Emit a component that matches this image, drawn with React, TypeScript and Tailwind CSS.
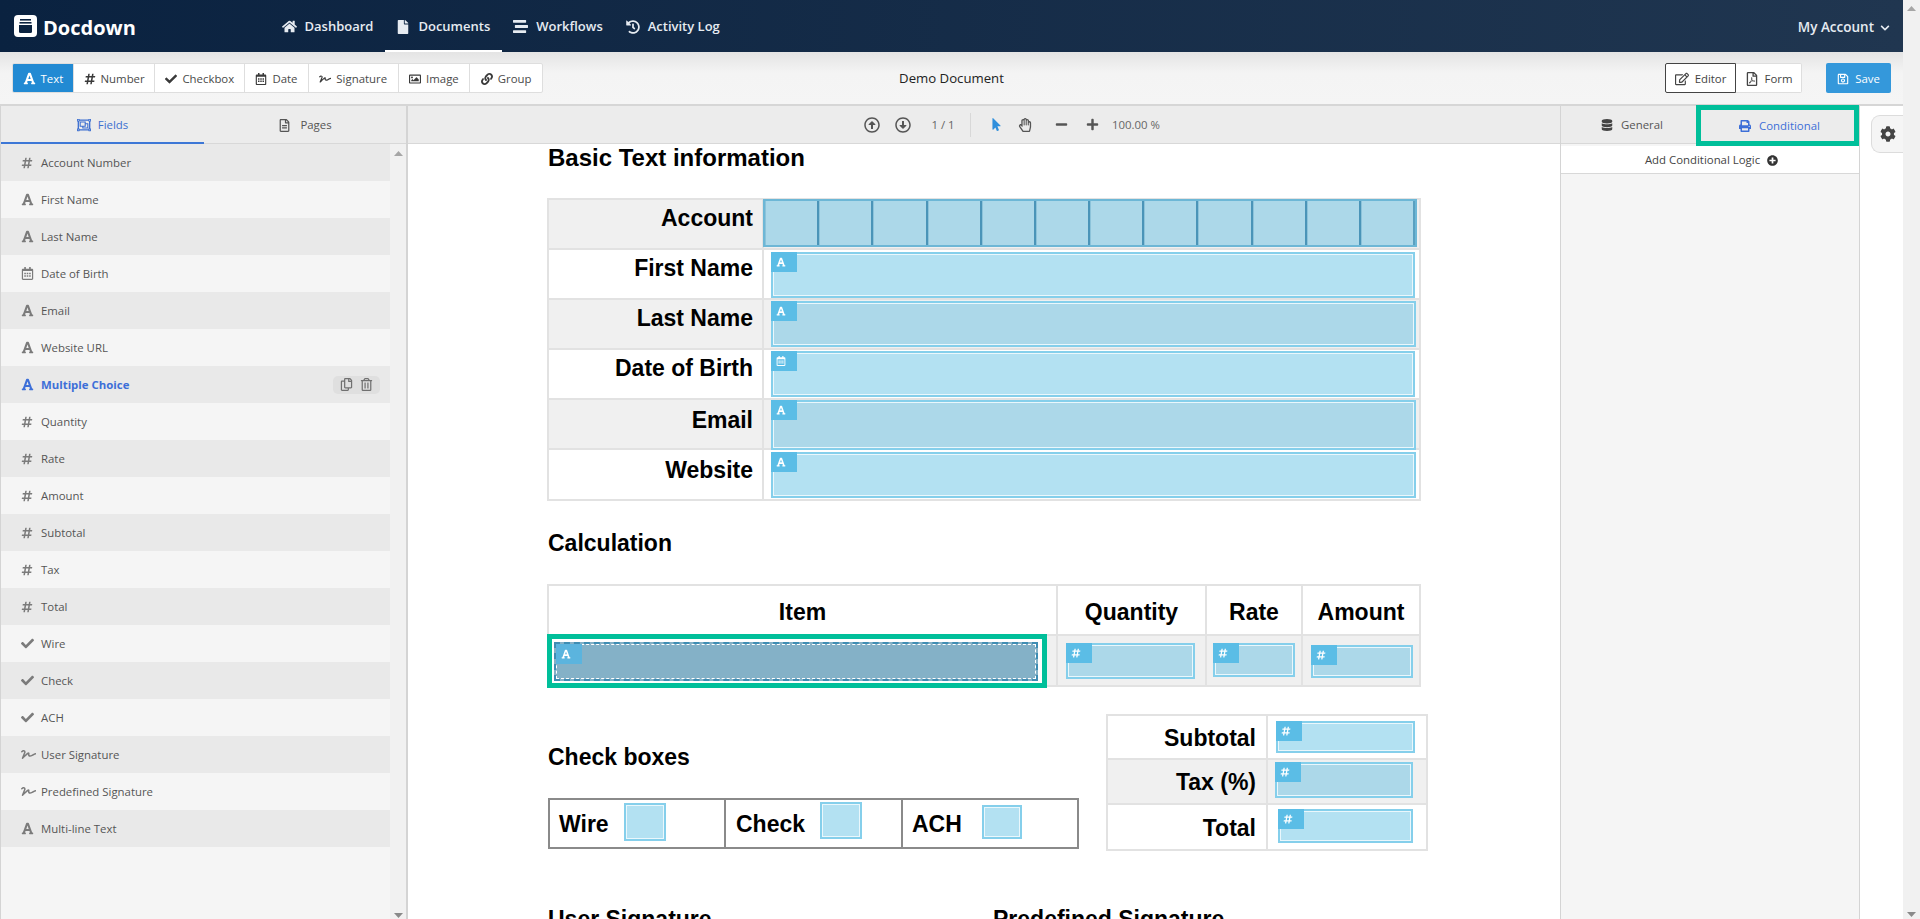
import type { ReactNode } from 'react';
import {
  FaHome, FaFile, FaStream, FaHistory, FaFont, FaHashtag, FaCheck, FaRegCalendarAlt, FaSignature,
  FaRegImage, FaLink, FaRegEdit, FaRegFilePdf, FaRegSave, FaDatabase, FaPrint, FaPlusCircle, FaCog,
  FaChevronDown, FaRegArrowAltCircleUp, FaRegArrowAltCircleDown, FaMousePointer, FaRegHandPaper,
  FaMinus, FaPlus, FaRegCopy, FaRegTrashAlt, FaRegObjectGroup, FaRegFileAlt,
} from 'react-icons/fa';

const fieldRows = [
  { icon: FaHashtag, label: 'Account Number', size: 12 },
  { icon: FaFont, label: 'First Name', size: 13 },
  { icon: FaFont, label: 'Last Name', size: 13 },
  { icon: FaRegCalendarAlt, label: 'Date of Birth', size: 13 },
  { icon: FaFont, label: 'Email', size: 13 },
  { icon: FaFont, label: 'Website URL', size: 13 },
  { icon: FaFont, label: 'Multiple Choice', size: 13, active: true },
  { icon: FaHashtag, label: 'Quantity', size: 12 },
  { icon: FaHashtag, label: 'Rate', size: 12 },
  { icon: FaHashtag, label: 'Amount', size: 12 },
  { icon: FaHashtag, label: 'Subtotal', size: 12 },
  { icon: FaHashtag, label: 'Tax', size: 12 },
  { icon: FaHashtag, label: 'Total', size: 12 },
  { icon: FaCheck, label: 'Wire', size: 13 },
  { icon: FaCheck, label: 'Check', size: 13 },
  { icon: FaCheck, label: 'ACH', size: 13 },
  { icon: FaSignature, label: 'User Signature', size: 15 },
  { icon: FaSignature, label: 'Predefined Signature', size: 15 },
  { icon: FaFont, label: 'Multi-line Text', size: 13 },
];

const toolItems = [
  { icon: FaFont, label: 'Text', width: 'w-[61px]', active: true },
  { icon: FaHashtag, label: 'Number', width: 'w-[82px]' },
  { icon: FaCheck, label: 'Checkbox', width: 'w-[90px]' },
  { icon: FaRegCalendarAlt, label: 'Date', width: 'w-[64px]' },
  { icon: FaSignature, label: 'Signature', width: 'w-[90px]' },
  { icon: FaRegImage, label: 'Image', width: 'w-[72px]' },
  { icon: FaLink, label: 'Group', width: 'w-[72px]' },
];

const navItems = [
  { icon: FaHome, label: 'Dashboard', iconSize: 15 },
  { icon: FaFile, label: 'Documents', iconSize: 14, active: true },
  { icon: FaStream, label: 'Workflows', iconSize: 15 },
  { icon: FaHistory, label: 'Activity Log', iconSize: 14 },
];

function Logo() {
  return (
    <svg width="23" height="22" viewBox="0 0 23 22" className="-mt-[3px] shrink-0">
      <rect width="23" height="22" rx="4" fill="#fff" />
      <rect x="6" y="4" width="11" height="1.6" fill="#0a2240" />
      <rect x="5.5" y="7" width="12" height="1.6" fill="#0a2240" />
      <path d="M5 10h13v6.5a1.5 1.5 0 0 1-1.5 1.5h-10A1.5 1.5 0 0 1 5 16.5z" fill="#0a2240" />
    </svg>
  );
}

function ScrollArrow({ down, color = '#a6a6a6' }: { down?: boolean; color?: string }) {
  return (
    <svg width="9" height="5" viewBox="0 0 9 5">
      <path d={down ? 'M0 0h9L4.5 5z' : 'M4.5 0L9 5H0z'} fill={color} />
    </svg>
  );
}

function Field({
  icon: Icon,
  className,
  tone,
}: {
  icon: typeof FaFont;
  className: string;
  tone: 'light' | 'dark';
}) {
  return (
    <div
      className={`relative shrink-0 border-2 border-[#85cfeb] shadow-[inset_0_0_0_1px_#eaf7fc] ${
        tone === 'light' ? 'bg-[#b3e1f2]' : 'bg-[#acd8e9]'
      } ${className}`}
    >
      <div className="absolute -top-[2px] -left-[2px] flex h-[20px] w-[26px] items-center bg-[#5bbde6] pl-[5px] text-white">
        <Icon size={10} />
      </div>
    </div>
  );
}

function CheckField({ className }: { className: string }) {
  return <div className={`border-2 border-[#85cfeb] bg-[#b3e1f2] shadow-[inset_0_0_0_1px_#eaf7fc] ${className}`} />;
}

function Comb() {
  return (
    <div className="-mt-px -ml-px flex h-[48px] w-[654px] shrink-0 border-2 border-[#6db7d6] bg-[#acd8e9]">
      {Array.from({ length: 12 }).map((_, i) => (
        <div key={i} className="h-full flex-1 border-r-2 border-l border-r-[#4a94b8] border-l-[#8cc3da] last:border-r-[#5aa0c0]" />
      ))}
    </div>
  );
}

function InfoRow({
  label,
  shaded,
  labelClass = 'pt-[5px]',
  children,
  tall,
}: {
  label: string;
  shaded?: boolean;
  labelClass?: string;
  children: ReactNode;
  tall?: boolean;
}) {
  return (
    <div className={`flex border-b-2 border-[#e2e2e2] ${tall ? 'h-[51px]' : 'h-[50px]'} ${shaded ? 'bg-[#f0f0f0]' : 'bg-white'}`}>
      <div className={`h-full w-[215px] shrink-0 border-r-2 border-[#e2e2e2] pr-[9px] text-right ${labelClass}`}>{label}</div>
      {children}
    </div>
  );
}

function ToolButton({ item, last }: { item: (typeof toolItems)[number]; last: boolean }) {
  const Icon = item.icon;
  return (
    <div
      className={`flex h-full items-center justify-center gap-[5px] pt-px text-[11.4px] ${item.width} ${
        item.active ? 'bg-[#228ad3] text-white' : 'text-[#4a4a4a]'
      } ${last ? '' : 'border-r border-[#dedede]'}`}
    >
      <Icon size={item.icon === FaFont ? 13 : 12} className={item.active ? 'text-white' : 'text-[#3a3a3a]'} />
      <span>{item.label}</span>
    </div>
  );
}

export default function App() {
  return (
    <div className="flex h-[919px] w-[1920px] overflow-hidden bg-white font-['Open_Sans',sans-serif]">
      <div className="flex h-full w-[1903px] flex-col">
        {/* Top nav */}
        <header className="flex h-[52px] shrink-0 items-center bg-gradient-to-r from-[#0a2240] to-[#203650] pt-[3px] pr-[13px] pl-[14px] text-[#e6ebf1]">
          <Logo />
          <span className="ml-[6px] w-[227px] shrink-0 text-[20px] font-bold text-white">Docdown</span>
          <nav className="flex h-full">
            {navItems.map((item) => {
              const Icon = item.icon;
              return (
                <div
                  key={item.label}
                  className={`flex h-full items-center gap-[8px] border-b-2 px-[11.5px] text-[13px] font-semibold ${
                    item.active ? 'border-white' : 'border-transparent'
                  }`}
                >
                  <Icon size={item.iconSize} />
                  <span>{item.label}</span>
                </div>
              );
            })}
          </nav>
          <div className="ml-auto flex items-center gap-[6px] text-[13.5px] font-semibold">
            <span>My Account</span>
            <FaChevronDown size={10} />
          </div>
        </header>

        {/* Editor toolbar */}
        <div className="grid h-[52px] shrink-0 grid-cols-[1fr_auto_1fr] items-center bg-gradient-to-b from-[#e4e4e4] via-[#f4f4f4] via-40% to-[#f5f5f5] px-[12px]">
          <div className="flex h-[30px] w-[531px] overflow-hidden rounded-[2px] border border-[#dedede] bg-white">
            {toolItems.map((item, i) => (
              <ToolButton key={item.label} item={item} last={i === toolItems.length - 1} />
            ))}
          </div>
          <div className="pt-px text-[13.2px] text-[#222]">Demo Document</div>
          <div className="flex items-center justify-end">
            <div className="flex h-[30px] w-[71px] items-center justify-center gap-[6px] rounded-l-[2px] border border-[#444] bg-white pt-px text-[11.4px] text-[#444]">
              <FaRegEdit size={14} />
              <span>Editor</span>
            </div>
            <div className="flex h-[30px] w-[66px] items-center justify-center gap-[6px] rounded-r-[2px] border border-l-0 border-[#dedede] bg-white pt-px text-[11.4px] text-[#444]">
              <FaRegFilePdf size={14} />
              <span>Form</span>
            </div>
            <div className="ml-[24px] flex h-[30px] w-[65px] items-center justify-center gap-[6px] rounded-[2px] bg-[#3498db] pt-px text-[11.4px] text-white">
              <FaRegSave size={12} />
              <span>Save</span>
            </div>
          </div>
        </div>

        <div className="flex min-h-0 flex-1 border-t-2 border-[#d6d6d6]">
          {/* Fields panel */}
          <aside className="flex h-full w-[408px] shrink-0 flex-col border-r-2 border-l border-[#d4d4d4] bg-[#f5f5f5]">
            <div className="flex h-[38px] shrink-0 border-b border-[#d8d8d8] bg-[#ececec] text-[11.4px]">
              <div className="flex h-[38px] w-[203px] items-center justify-center gap-[7px] border-b-2 border-[#3d77d6] pt-px text-[#3d6fd0]">
                <FaRegObjectGroup size={14} />
                <span>Fields</span>
              </div>
              <div className="flex flex-1 items-center justify-center gap-[9px] pt-px text-[#555]">
                <FaRegFileAlt size={13} />
                <span>Pages</span>
              </div>
            </div>
            <div className="flex min-h-0 flex-1">
              <div className="w-[389px] shrink-0">
                {fieldRows.map((row, i) => {
                  const Icon = row.icon;
                  return (
                    <div
                      key={row.label}
                      className={`flex h-[37px] items-center text-[11.4px] ${i % 2 === 0 ? 'bg-[#e9e9e9]' : 'bg-[#f5f5f5]'} ${
                        row.active ? 'font-bold text-[#3d6fd8]' : 'text-[#555]'
                      }`}
                    >
                      <span className={`ml-[20px] flex w-[20px] shrink-0 ${row.active ? 'text-[#3d6fd8]' : 'text-[#7b7b7b]'}`}>
                        <Icon size={row.size} />
                      </span>
                      <span>{row.label}</span>
                      {row.active && (
                        <span className="mr-[10px] ml-auto flex h-[18px] w-[47px] items-center justify-center gap-[7px] rounded-[5px] bg-[#dfdfdf] text-[#707070]">
                          <FaRegCopy size={13} />
                          <FaRegTrashAlt size={13} />
                        </span>
                      )}
                    </div>
                  );
                })}
              </div>
              <div className="flex flex-1 flex-col items-center justify-between bg-[#f1f1f1] pt-[7px] pb-px">
                <ScrollArrow />
                <ScrollArrow down color="#8a8a8a" />
              </div>
            </div>
          </aside>

          {/* Document column */}
          <main className="flex h-full w-[1152px] shrink-0 flex-col">
            <div className="flex h-[38px] shrink-0 items-center border-b border-[#d8d8d8] bg-[#ececec] text-[11.4px] text-[#666]">
              <span className="ml-[456px] flex w-[31px] text-[#555]"><FaRegArrowAltCircleUp size={16} /></span>
              <span className="flex w-[28px] text-[#555]"><FaRegArrowAltCircleDown size={16} /></span>
              <span className="w-[40px] text-center">1 / 1</span>
              <span className="ml-[7px] h-[24px] border-l border-[#d8d8d8]" />
              <span className="ml-[19px] flex w-[28px] text-[#2f8fdc]"><FaMousePointer size={13} /></span>
              <span className="flex w-[37px] text-[#555]"><FaRegHandPaper size={14} /></span>
              <span className="flex w-[31px] text-[#555]"><FaMinus size={13} /></span>
              <span className="flex w-[26px] text-[#555]"><FaPlus size={13} /></span>
              <span>100.00 %</span>
            </div>
            <div className="min-h-0 flex-1 overflow-hidden bg-white pl-[139px] font-['Liberation_Sans',sans-serif] text-[23px] leading-[26px] font-bold text-black">
              <div className="ml-px h-[27px] text-[24px] leading-[27px]">Basic Text information</div>

              <div className="mt-[27px] w-[874px] border-t-2 border-r-2 border-l-2 border-[#e2e2e2]">
                <InfoRow label="Account" shaded><Comb /></InfoRow>
                <InfoRow label="First Name"><Field icon={FaFont} tone="light" className="mt-[2px] ml-[7px] h-[46px] w-[644px]" /></InfoRow>
                <InfoRow label="Last Name" shaded><Field icon={FaFont} tone="dark" className="mt-px ml-[7px] h-[46px] w-[645px]" /></InfoRow>
                <InfoRow label="Date of Birth"><Field icon={FaRegCalendarAlt} tone="light" className="mt-px ml-[7px] h-[46px] w-[644px]" /></InfoRow>
                <InfoRow label="Email" shaded labelClass="pt-[7px]"><Field icon={FaFont} tone="dark" className="ml-[7px] h-[50px] w-[645px]" /></InfoRow>
                <InfoRow label="Website" tall labelClass="pt-[7px]"><Field icon={FaFont} tone="light" className="mt-[2px] ml-[7px] h-[46px] w-[645px]" /></InfoRow>
              </div>

              <div className="mt-[29px] ml-px h-[26px]">Calculation</div>

              <div className="mt-[28px] w-[874px] border-t-2 border-r-2 border-l-2 border-[#e2e2e2]">
                <div className="flex h-[50px] items-center border-b-2 border-[#e2e2e2] text-center">
                  <div className="flex h-full w-[509px] items-center justify-center border-r-2 border-[#e2e2e2] pt-[3px]">Item</div>
                  <div className="flex h-full w-[149px] items-center justify-center border-r-2 border-[#e2e2e2] pt-[3px]">Quantity</div>
                  <div className="flex h-full w-[96px] items-center justify-center border-r-2 border-[#e2e2e2] pt-[3px]">Rate</div>
                  <div className="flex h-full flex-1 items-center justify-center pt-[3px]">Amount</div>
                </div>
                <div className="flex h-[51px] border-b-2 border-[#e2e2e2] bg-[#f0f0f0]">
                  <div className="h-full w-[509px] border-r-2 border-[#e2e2e2]">
                    <div className="relative -mt-[2px] -ml-[2px] h-[54px] w-[500px] border-5 border-[#00bf9a] bg-white pt-[3px] pl-[2px]">
                      <div className="relative h-[39px] w-[484px] border-2 border-dashed border-[#3f8db3] bg-[#84b1c7]">
                        <div className="absolute inset-0 border border-dashed border-white" />
                        <div className="absolute top-0 left-0 flex h-[20px] w-[26px] items-center bg-[#5bb4de] pl-[5px] text-white">
                          <FaFont size={10} />
                        </div>
                      </div>
                    </div>
                  </div>
                  <div className="h-full w-[149px] border-r-2 border-[#e2e2e2] pt-[7px] pl-[8px]">
                    <Field icon={FaHashtag} tone="dark" className="h-[36px] w-[129px]" />
                  </div>
                  <div className="h-full w-[96px] border-r-2 border-[#e2e2e2] pt-[7px] pl-[6px]">
                    <Field icon={FaHashtag} tone="dark" className="h-[34px] w-[82px]" />
                  </div>
                  <div className="h-full flex-1 pt-[9px] pl-[8px]">
                    <Field icon={FaHashtag} tone="dark" className="h-[33px] w-[102px]" />
                  </div>
                </div>
              </div>

              <div className="mt-[27px] flex items-start">
                <div className="w-[559px] shrink-0">
                  <div className="mt-[30px] ml-px h-[26px]">Check boxes</div>
                  <div className="mt-[28px] ml-px flex h-[51px] w-[531px] border-2 border-[#8a8a8a]">
                    <div className="flex h-full w-[176px] shrink-0 items-center border-r-2 border-[#8a8a8a] pl-[9px]">
                      <span className="w-[65px]">Wire</span>
                      <CheckField className="-mt-[4px] h-[38px] w-[42px] shrink-0" />
                    </div>
                    <div className="flex h-full w-[177px] shrink-0 items-center border-r-2 border-[#8a8a8a] pl-[10px]">
                      <span className="w-[84px]">Check</span>
                      <CheckField className="-mt-[6px] h-[37px] w-[42px] shrink-0" />
                    </div>
                    <div className="flex h-full flex-1 items-center pl-[9px]">
                      <span className="w-[70px]">ACH</span>
                      <CheckField className="-mt-[4px] h-[34px] w-[40px] shrink-0" />
                    </div>
                  </div>
                </div>
                <div className="w-[322px] shrink-0 border-t-2 border-r-2 border-l-2 border-[#e2e2e2]">
                  <div className="flex h-[44px] border-b-2 border-[#e2e2e2]">
                    <div className="h-full w-[160px] border-r-2 border-[#e2e2e2] pt-[9px] pr-[10px] text-right">Subtotal</div>
                    <Field icon={FaHashtag} tone="light" className="mt-[5px] ml-[8px] h-[32px] w-[139px]" />
                  </div>
                  <div className="flex h-[45px] border-b-2 border-[#e2e2e2] bg-[#f0f0f0]">
                    <div className="h-full w-[160px] border-r-2 border-[#e2e2e2] pt-[9px] pr-[10px] text-right">Tax (%)</div>
                    <Field icon={FaHashtag} tone="dark" className="mt-[2px] ml-[7px] h-[36px] w-[138px]" />
                  </div>
                  <div className="flex h-[46px] border-b-2 border-[#e2e2e2]">
                    <div className="h-full w-[160px] border-r-2 border-[#e2e2e2] pt-[10px] pr-[10px] text-right">Total</div>
                    <Field icon={FaHashtag} tone="light" className="mt-[4px] ml-[10px] h-[34px] w-[135px]" />
                  </div>
                </div>
              </div>

              <div className="mt-[55px] ml-px flex">
                <div className="w-[445px]">User Signature</div>
                <div>Predefined Signature</div>
              </div>
            </div>
          </main>

          {/* Properties panel */}
          <section className="flex h-full w-[300px] shrink-0 flex-col border-r border-l border-[#d4d4d4] bg-[#f5f5f5]">
            <div className="flex h-[38px] shrink-0 bg-[#ececec] text-[11.4px]">
              <div className="flex w-[135px] items-center justify-center gap-[8px] border-b border-[#d8d8d8] pl-[7px] text-[#555]">
                <FaDatabase size={12} className="text-[#444]" />
                <span>General</span>
              </div>
              <div className="relative -mt-px flex h-[41px] flex-1 items-center justify-center gap-[8px] border-5 border-[#00bf9a] pl-[4px] text-[#3d6fd8]">
                <FaPrint size={12} />
                <span>Conditional</span>
              </div>
            </div>
            <div className="mt-[2px] flex h-[28px] shrink-0 items-center justify-center gap-[7px] border-b border-[#d8d8d8] bg-white pt-px pl-[3px] text-[11.4px] text-[#444]">
              <span>Add Conditional Logic</span>
              <FaPlusCircle size={11} className="text-[#333]" />
            </div>
          </section>

          <div className="flex-1 bg-white pt-[9px] pl-[11px]">
            <div className="flex h-[38px] w-[32px] items-center justify-center rounded-l-[9px] border border-r-0 border-[#dcdcdc] bg-[#f5f5f5] text-[#444]">
              <FaCog size={16} />
            </div>
          </div>
        </div>
      </div>

      {/* Page scrollbar */}
      <div className="flex h-full flex-1 flex-col items-center justify-between bg-[#f1f1f1] pt-[6px] pb-[2px]">
        <ScrollArrow />
        <ScrollArrow down color="#8a8a8a" />
      </div>
    </div>
  );
}
